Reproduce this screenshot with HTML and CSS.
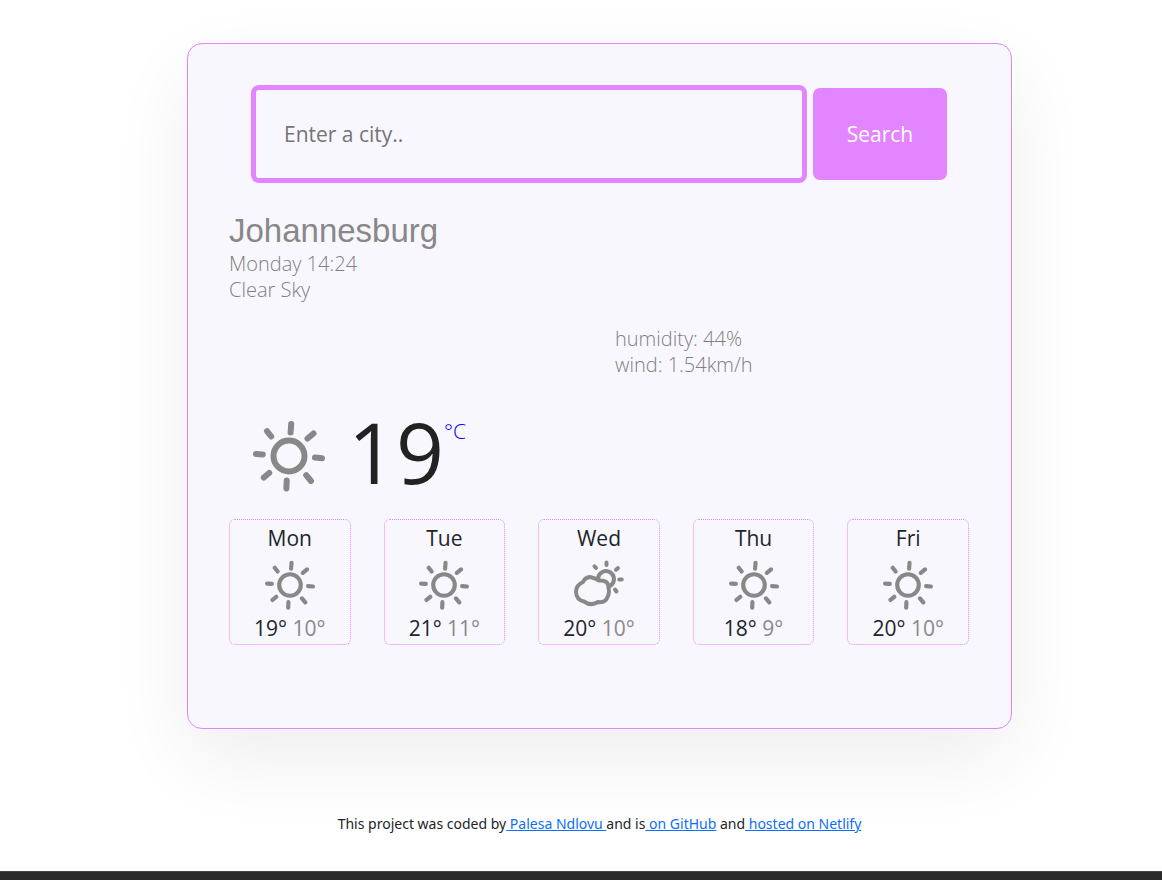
FILE: index.html
```
<!DOCTYPE html>
<html lang="en">
<head>
<meta charset="utf-8">
<title>Weather</title>
<link rel="stylesheet" href="styles.css">
</head>
<body>
<svg class="sprite" aria-hidden="true">
  <symbol id="sun" viewBox="0 0 72 72">
    <g fill="none" stroke="#888" stroke-width="6" stroke-linecap="round">
      <circle cx="36" cy="36" r="15.5"/>
      <path d="M37.6 12.5 38.2 4M54.5 18.5 60.5 13.500M62 37.6 69 38.2M53.2 55.2 58 61M33.7 60.5 33.4 68.5M16.2 53 10.8 57.5M9.800 34.4 3 34M18.2 16.500 14 11.2"/>
    </g>
  </symbol>
  <symbol id="cloud-sun" viewBox="0 0 50 50">
    <g fill="none" stroke="#888" stroke-width="4" stroke-linecap="round" stroke-linejoin="round">
      <path d="M24 18.500A8 8 0 1 1 36 26"/>
      <path d="M32.500 5V2.500M42 9.800 44 8M45.200 19.500h2.500M41 29.500 42.500 31.500M22 8 20.500 6.300"/>
      <path d="M9 22Q11 17.500 16 17Q21 18 25 20.500Q35 20 34.500 28Q36 33 33 38Q31 43 24 42Q17 46.500 10 41.500Q2.500 40 2 32Q2 25 9 22Z"/>
    </g>
  </symbol>
</svg>
<div class="page">
  <main class="card">
    <form class="search">
      <input class="search-input" type="text" placeholder="Enter a city.." aria-label="City">
      <button class="search-button" type="button">Search</button>
    </form>
    <h1 class="city">Johannesburg</h1>
    <ul class="details">
      <li>Monday 14:24</li>
      <li>Clear Sky</li>
    </ul>
    <div class="conditions">
      <ul class="details">
        <li>humidity: 44%</li>
        <li>wind: 1.54km/h</li>
      </ul>
    </div>
    <div class="current">
      <svg class="current-icon" role="img" aria-label="Clear sky"><use href="#sun"/></svg>
      <strong class="temperature">19</strong>
      <span class="unit">°C</span>
    </div>
    <div class="forecast">
      <div class="day"><div>Mon</div><svg class="day-icon"><use href="#sun"/></svg><div>19° <span class="low">10°</span></div></div>
      <div class="day"><div>Tue</div><svg class="day-icon"><use href="#sun"/></svg><div>21° <span class="low">11°</span></div></div>
      <div class="day"><div>Wed</div><svg class="day-icon"><use href="#cloud-sun"/></svg><div>20° <span class="low">10°</span></div></div>
      <div class="day"><div>Thu</div><svg class="day-icon"><use href="#sun"/></svg><div>18° <span class="low">9°</span></div></div>
      <div class="day"><div>Fri</div><svg class="day-icon"><use href="#sun"/></svg><div>20° <span class="low">10°</span></div></div>
    </div>
  </main>
  <footer class="credits">This project was coded by<a href="#"> Palesa Ndlovu </a>and is<a href="#"> on GitHub</a> and<a href="#"> hosted on Netlify</a></footer>
</div>
<div class="bottom-bar"></div>
</body>
</html>
```
FILE: styles.css
```
* { box-sizing: border-box; }
body {
  margin: 0;
  min-height: 100vh;
  display: flex;
  flex-direction: column;
  background: #fff;
  color: #212529;
  font-family: "Segoe UI", "Open Sans", "Noto Sans", sans-serif;
  font-size: 21px;
  line-height: 26px;
}
.sprite { display: none; }
.page { flex: 1; padding: 43px 0 36px 37px; }
.card {
  max-width: 825px;
  margin: 0 auto;
  padding: 41px 42px 83px 41px;
  background: #f8f7fe;
  border: 1px solid #e285ff;
  border-radius: 15px;
  box-shadow: 0 30px 80px rgba(0, 0, 0, 0.07);
}
.search {
  display: flex;
  align-items: center;
  gap: 6px;
  padding: 0 22px;
}
.search-input {
  flex: 1;
  min-width: 0;
  height: 98px;
  padding: 0 28px;
  border: 5px solid #e285ff;
  border-radius: 8px;
  background: transparent;
  color: #212529;
  font: inherit;
}
.search-input::placeholder { color: #757575; opacity: 1; }
.search-button {
  width: 134px;
  height: 92px;
  padding: 0;
  border: 0;
  border-radius: 7px;
  background: #e285ff;
  color: #fff;
  font: inherit;
}
.city {
  margin: 27px 0 0;
  color: #888;
  font: 400 33px/41px Arial, "Liberation Sans", sans-serif;
}
.details {
  margin: 0;
  padding: 0;
  list-style: none;
  color: #808080;
  font-size: 20px;
  font-weight: 300;
}
.conditions { margin: 23px 0 0 386px; }
.current {
  display: flex;
  align-items: flex-start;
  margin-top: 40px;
  padding-left: 24px;
}
.current-icon { width: 72px; height: 72px; margin-top: 2px; }
.temperature {
  margin-left: 23px;
  color: #222;
  font-size: 84px;
  font-weight: 400;
  line-height: 68px;
}
.unit { color: #00f; font-weight: 300; }
.forecast {
  display: grid;
  grid-template-columns: repeat(5, 1fr);
  gap: 33px;
  margin-top: 27px;
}
.day {
  display: flex;
  flex-direction: column;
  align-items: center;
  padding: 5px 0 3px;
  border: 1px dotted #e285ff;
  border-radius: 6px;
}
.day-icon { width: 50px; height: 50px; margin: 9px 0 5px; }
.low { color: #888; }
.credits {
  margin-top: 84px;
  font-family: "Segoe UI", "Noto Sans", "Open Sans", sans-serif;
  font-size: 14px;
  line-height: 22px;
  text-align: center;
}
.credits a { color: #0d6efd; text-decoration: underline; }
.bottom-bar { height: 9px; background: #2a2a2a; border-top: 1px solid #444; }
```
